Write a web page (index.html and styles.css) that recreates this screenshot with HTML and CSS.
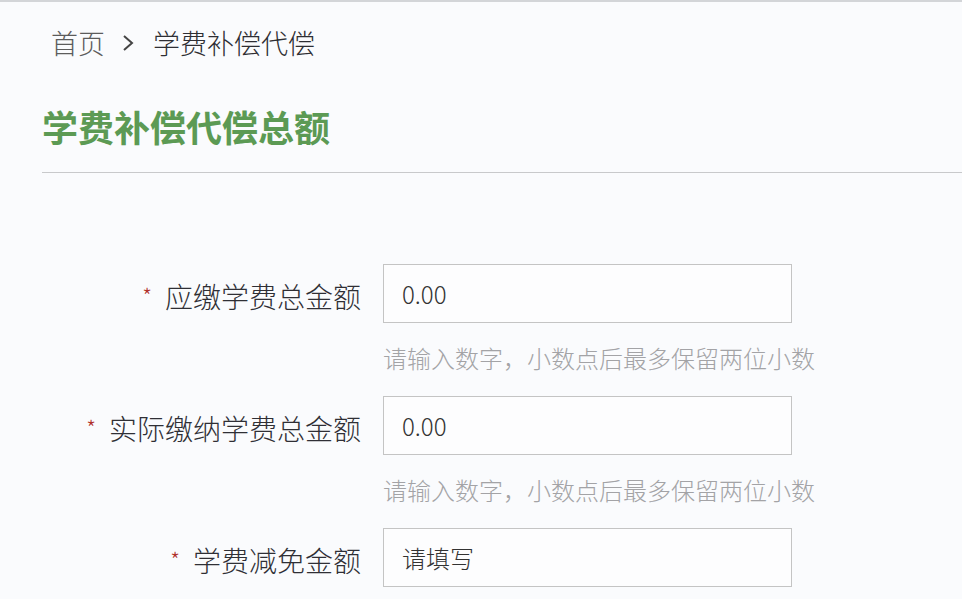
FILE: index.html
```html
<!DOCTYPE html>
<html lang="zh-CN">
<head>
<meta charset="utf-8">
<title>学费补偿代偿总额</title>
<link rel="stylesheet" href="styles.css">
</head>
<body>
<div class="page">
  <nav class="breadcrumb">
    <span class="crumb-home">首页</span>
    <svg class="crumb-sep" width="12" height="18" viewBox="0 0 12 18" aria-hidden="true"><polyline points="2,2 10,9 2,16" fill="none" stroke="#444" stroke-width="2"/></svg>
    <span class="crumb-current">学费补偿代偿</span>
  </nav>
  <h1 class="title">学费补偿代偿总额</h1>
  <div class="divider"></div>
  <form class="form">
    <div class="form-row">
      <label class="form-label"><span class="req">*</span>应缴学费总金额</label>
      <div class="form-field">
        <div class="input">0.00</div>
        <div class="help">请输入数字，小数点后最多保留两位小数</div>
      </div>
    </div>
    <div class="form-row">
      <label class="form-label"><span class="req">*</span>实际缴纳学费总金额</label>
      <div class="form-field">
        <div class="input">0.00</div>
        <div class="help">请输入数字，小数点后最多保留两位小数</div>
      </div>
    </div>
    <div class="form-row">
      <label class="form-label"><span class="req">*</span>学费减免金额</label>
      <div class="form-field">
        <div class="input">请填写</div>
      </div>
    </div>
  </form>
</div>
</body>
</html>
```
FILE: styles.css
```css
html, body {
  margin: 0;
  padding: 0;
  background: #fafbfd;
  overflow: hidden;
}
body {
  font-family: "Noto Sans CJK SC", "Noto Sans", sans-serif;
  font-weight: 300;
  color: #333;
  border-top: 2px solid #d3d5d8;
}
.page {
  padding-left: 42px;
}
.breadcrumb {
  margin-left: 9px;
  padding-top: 23px;
  height: 36px;
  font-size: 27px;
  line-height: 36px;
  display: flex;
  align-items: center;
}
.crumb-home {
  color: #5c5c5c;
}
.crumb-sep {
  margin: 0 19px 0 17px;
}
.crumb-current {
  color: #2e2e33;
}
.title {
  margin: 41px 0 0 0;
  font-size: 36px;
  line-height: 48px;
  font-weight: 700;
  color: #5c9a54;
}
.divider {
  margin-top: 22px;
  height: 1px;
  background: #c8c9cb;
}
.form {
  margin: 91px 0 0 -42px;
}
.form-row {
  display: grid;
  grid-template-columns: 361px 409px;
  column-gap: 22px;
  margin-bottom: 13px;
}
.form-label {
  height: 59px;
  display: flex;
  align-items: center;
  justify-content: flex-end;
  font-size: 28px;
  color: #2f2f35;
  padding-top: 4px;
  box-sizing: border-box;
}
.req {
  color: #b0302c;
  font-size: 22px;
  margin-right: 13px;
  position: relative;
  top: -1px;
}
.input {
  box-sizing: border-box;
  height: 59px;
  border: 1px solid #c4c4c4;
  background: #fdfdfe;
  padding-left: 18px;
  font-size: 24px;
  line-height: 57px;
  color: #333;
}
.help {
  margin-top: 19px;
  font-size: 24px;
  line-height: 32px;
  color: #a3a3a6;
  white-space: nowrap;
  margin-bottom: 9px;
}
```
